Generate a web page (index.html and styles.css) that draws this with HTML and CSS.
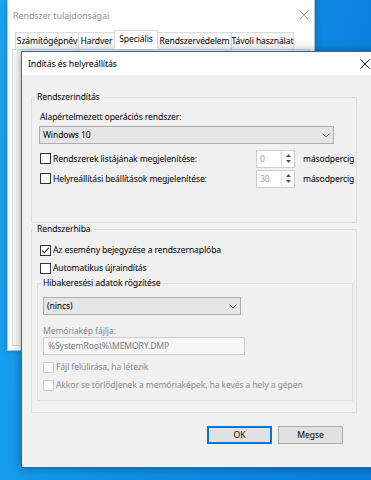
FILE: index.html
```html
<!DOCTYPE html>
<html lang="hu">
<head>
<meta charset="utf-8">
<title>Indítás és helyreállítás</title>
<link rel="stylesheet" href="styles.css">
</head>
<body>
<div class="desktop">
  <div class="win-back">
    <div class="wb-title">
      <span>Rendszer tulajdonságai</span>
      <svg class="wb-close" width="10" height="10" viewBox="0 0 10 10"><path d="M0.5 0.5 L9.5 9.5 M9.5 0.5 L0.5 9.5" stroke="#9a9a9a" stroke-width="1" fill="none"/></svg>
    </div>
    <div class="tabs">
      <span class="tab t1">Számítógépnév</span>
      <span class="tab t2">Hardver</span>
      <span class="tab t3 active">Speciális</span>
      <span class="tab t4">Rendszervédelem</span>
      <span class="tab t5">Távoli használat</span>
    </div>
    <div class="panel"></div>
  </div>

  <div class="dlg">
    <div class="dlg-title">
      <span>Indítás és helyreállítás</span>
      <span class="dlg-close"><svg width="10" height="10" viewBox="0 0 10 10"><path d="M0.5 0.5 L9.5 9.5 M9.5 0.5 L0.5 9.5" stroke="#111" stroke-width="1" fill="none"/></svg></span>
    </div>
    <div class="dlg-body">
      <fieldset class="grp g1">
        <legend>Rendszerindítás</legend>
        <div class="lbl first">Alapértelmezett operációs rendszer:</div>
        <div class="combo wide">
          <span>Windows 10</span>
          <svg width="8" height="5" viewBox="0 0 8 5"><path d="M0.5 0.5 L4 4 L7.5 0.5" stroke="#6a6a6a" stroke-width="1" fill="none"/></svg>
        </div>
        <div class="row srow first-row">
          <span class="cb"></span>
          <span class="rl">Rendszerek listájának megjelenítése:</span>
          <span class="spin"><span class="val">0</span><span class="arrows"><svg width="5" height="3" viewBox="0 0 5 3"><path d="M0 3 L2.5 0 L5 3Z" fill="#555"/></svg><svg width="5" height="3" viewBox="0 0 5 3"><path d="M0 0 L2.5 3 L5 0Z" fill="#555"/></svg></span></span>
          <span class="unit">másodpercig</span>
        </div>
        <div class="row srow">
          <span class="cb"></span>
          <span class="rl">Helyreállítási beállítások megjelenítése:</span>
          <span class="spin"><span class="val">30</span><span class="arrows"><svg width="5" height="3" viewBox="0 0 5 3"><path d="M0 3 L2.5 0 L5 3Z" fill="#555"/></svg><svg width="5" height="3" viewBox="0 0 5 3"><path d="M0 0 L2.5 3 L5 0Z" fill="#555"/></svg></span></span>
          <span class="unit">másodpercig</span>
        </div>
      </fieldset>

      <fieldset class="grp g2">
        <legend>Rendszerhiba</legend>
        <div class="row crow first-crow">
          <span class="cb"><svg width="9" height="9" viewBox="0 0 9 9"><path d="M1.2 4.6 L3.4 6.8 L7.8 1.8" stroke="#222" stroke-width="1.1" fill="none"/></svg></span>
          <span>Az esemény bejegyzése a rendszernaplóba</span>
        </div>
        <div class="row crow">
          <span class="cb"></span>
          <span>Automatikus újraindítás</span>
        </div>

        <fieldset class="grp g3">
          <legend>Hibakeresési adatok rögzítése</legend>
          <div class="combo narrow">
            <span>(nincs)</span>
            <svg width="8" height="5" viewBox="0 0 8 5"><path d="M0.5 0.5 L4 4 L7.5 0.5" stroke="#6a6a6a" stroke-width="1" fill="none"/></svg>
          </div>
          <div class="lbl gray">Memóriakép fájlja:</div>
          <div class="textbox">%SystemRoot%\MEMORY.DMP</div>
          <div class="row crow dis first-dis">
            <span class="cb"></span>
            <span>Fájl felülírása, ha létezik</span>
          </div>
          <div class="row crow dis">
            <span class="cb"></span>
            <span>Akkor se törlődjenek a memóriaképek, ha kevés a hely a gépen</span>
          </div>
        </fieldset>
      </fieldset>

      <div class="btns">
        <span class="btn default">OK</span>
        <span class="btn">Megse</span>
      </div>
    </div>
  </div>
</div>
</body>
</html>
```

FILE: styles.css
```css
* { box-sizing: border-box; }
html, body { margin: 0; padding: 0; }
body {
  width: 371px;
  height: 480px;
  overflow: hidden;
  font-family: "Noto Sans", "Open Sans", sans-serif;
  font-size: 8.6px;
  letter-spacing: -0.12px;
  color: #000;
}
.desktop {
  position: relative;
  width: 371px;
  height: 480px;
  overflow: hidden;
  background: linear-gradient(100deg, #1ba4f1 0%, #0f90e6 45%, #0a7edc 100%);
}

/* background window */
.win-back {
  position: absolute;
  left: 7px;
  top: -1px;
  width: 308px;
  height: 352px;
  background: #fff;
  border: 1px solid #b7c6d4;
  box-shadow: 0 0 6px rgba(0, 0, 0, 0.25);
  display: flex;
  flex-direction: column;
}
.wb-title {
  height: 30px;
  flex: none;
  display: flex;
  align-items: center;
  justify-content: space-between;
  padding: 0 6px 0 5px;
  color: #939393;
  font-size: 9px;
}
.wb-close { margin-right: -1px; }
.tabs {
  height: 19px;
  flex: none;
  display: flex;
  align-items: flex-end;
  padding-left: 7px;
}
.tab {
  height: 17px;
  display: flex;
  align-items: center;
  justify-content: center;
  border: 1px solid #dadada;
  border-bottom: none;
  background: #fbfbfb;
  margin-right: -1px;
  white-space: nowrap;
}
.t1 { width: 64px; }
.t2 { width: 37px; }
.t3 { width: 44px; }
.t4 { width: 75px; }
.t5 { width: 63px; }
.tab.active {
  height: 19px;
  background: #fff;
  position: relative;
  z-index: 1;
  align-items: flex-start;
  padding-top: 2px;
}
.panel {
  flex: 1;
  margin: 0 4px 4px;
  border: 1px solid #d9d9d9;
  background: #fafafa;
}

/* dialog */
.dlg {
  position: absolute;
  left: 21px;
  top: 51px;
  width: 360px;
  height: 417px;
  background: #f0f0f0;
  border: 1px solid #2d6b9e;
  box-shadow: 0 0 10px rgba(0, 0, 0, 0.35);
}
.dlg-title {
  height: 23px;
  background: #fff;
  display: flex;
  align-items: center;
  justify-content: space-between;
  padding-left: 6px;
  font-size: 8.8px;
}
.dlg-close {
  width: 30px;
  height: 23px;
  display: flex;
  align-items: center;
  justify-content: center;
}
.dlg-body {
  padding: 16px 23px 0 9px;
}

fieldset.grp {
  margin: 0;
  border: 1px solid #dcdcdc;
  min-width: 0;
}
legend {
  padding: 0 2px;
  line-height: 12px;
  height: 12px;
}
.g1 { padding: 0 8px 34px 8px; }
.g1 legend { margin-left: -5px; }
.g2 { margin-top: 6px; padding: 0 3px 11px 5px; }
.g2 legend { margin-left: -2px; }
.g3 { margin-top: 6px; padding: 0 5px 6px 5px; }
.g3 legend { margin-left: -2px; }

.lbl { line-height: 12px; }
.lbl.first { margin-top: 8px; }
.lbl.gray { margin-top: 10px; color: #8c8c8c; }

.combo {
  display: flex;
  align-items: center;
  justify-content: space-between;
  height: 18px;
  background: #e5e5e5;
  border: 1px solid #adadad;
  padding: 0 3px 0 3px;
}
.combo.wide { margin-top: 3px; margin-left: -1px; width: 295px; }
.combo.narrow { margin-top: 8px; width: 198px; }

.textbox {
  width: 202px;
  height: 18px;
  border: 1px solid #cccccc;
  background: #f7f7f7;
  color: #7a7a7a;
  padding-left: 4px;
  display: flex;
  align-items: center;
}

.row {
  display: flex;
  align-items: center;
  white-space: nowrap;
}
.srow { height: 19px; margin-top: 1px; }
.srow.first-row { margin-top: 5px; }
.crow { height: 18px; }
.g2 > .crow { padding-left: 3px; }
.crow.first-crow { margin-top: 6px; }
.crow.first-dis { margin-top: 3px; }

.cb {
  width: 11px;
  height: 11px;
  flex: none;
  border: 1px solid #333;
  background: #fff;
  margin-right: 2px;
  display: flex;
  align-items: center;
  justify-content: center;
}
.dis { color: #8c8c8c; }
.dis .cb { border-color: #cfcfcf; background: #fbfbfb; }

.rl { width: 203px; flex: none; }
.spin {
  width: 39px;
  height: 18px;
  flex: none;
  display: flex;
  border: 1px solid #cfcfcf;
  background: #fff;
}
.val { flex: 1; padding-left: 3px; color: #a3a3a3; display: flex; align-items: center; }
.arrows {
  width: 13px;
  display: flex;
  flex-direction: column;
  align-items: center;
  justify-content: center;
  gap: 3px;
  border-left: 1px solid #e6e6e6;
}
.unit { margin-left: 8px; flex: none; }

.btns {
  display: flex;
  justify-content: flex-end;
  gap: 6px;
  padding-right: 14px;
  margin-top: 13px;
}
.btn {
  width: 65px;
  height: 18px;
  display: flex;
  align-items: center;
  justify-content: center;
  background: #e1e1e1;
  border: 1px solid #adadad;
}
.btn.default {
  border-color: #0078d7;
  box-shadow: inset 0 0 0 1px #0078d7;
}
```
